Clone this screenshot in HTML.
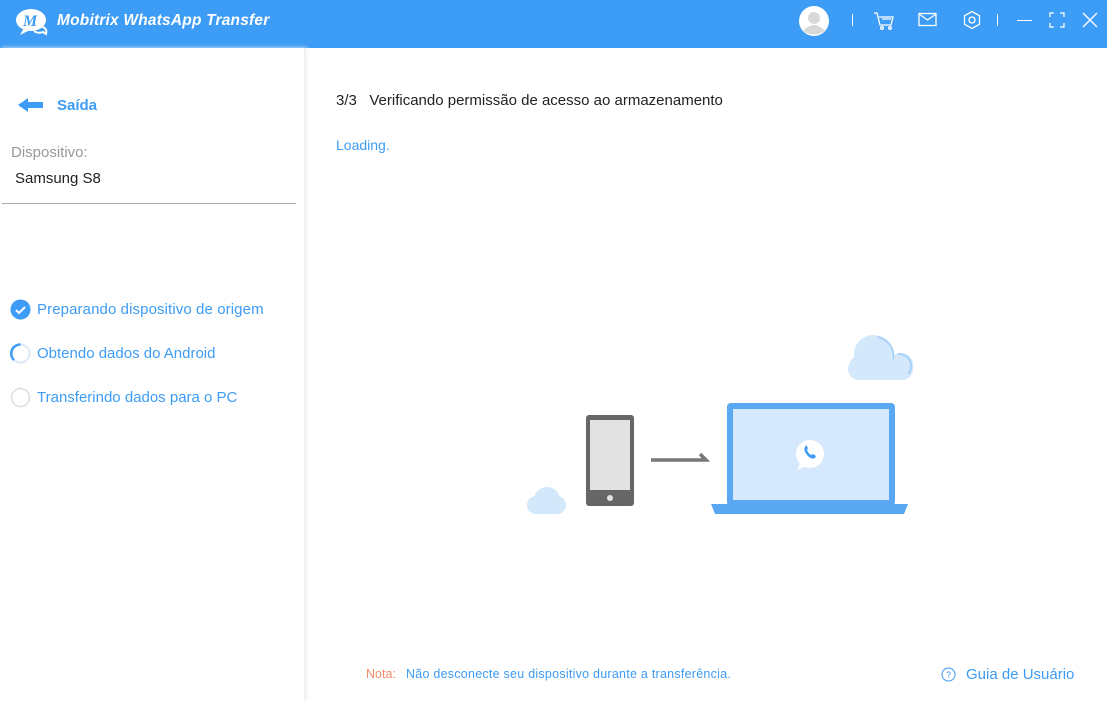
<!DOCTYPE html>
<html><head><meta charset="utf-8"><style>
*{margin:0;padding:0;box-sizing:border-box}
body{width:1107px;height:701px;overflow:hidden;background:#fff;font-family:"Liberation Sans",sans-serif;position:relative}
.top{position:absolute;left:0;top:0;width:1107px;height:48px;background:#3d9cf5}
.t{position:absolute;white-space:nowrap}
.side{position:absolute;left:0;top:48px;width:305px;height:653px;background:#fff;border-right:1px solid #eee;box-shadow:2px 0 4px #f2f2f2}
</style></head><body>
<div class="top">
<svg class="t" style="left:14px;top:8px" width="36" height="30" viewBox="0 0 36 30"><ellipse cx="17" cy="12" rx="15" ry="11" fill="#fff"/><path d="M10 20 L6 27 L16 22Z" fill="#fff"/><path d="M26 18 Q34 20 32 26 L29 24 Q24 26 20 23" fill="none" stroke="#fff" stroke-width="2"/><text x="9" y="18" font-family="Liberation Serif" font-style="italic" font-weight="bold" font-size="16" fill="#3d9cf5">M</text></svg>
<div class="t" style="left:57px;top:12px;color:#fff;font-weight:bold;font-style:italic;font-size:15.5px;letter-spacing:0.2px">Mobitrix WhatsApp Transfer</div>
<svg class="t" style="left:798px;top:5px" width="32" height="32"><circle cx="16" cy="16" r="15" fill="#fff"/><circle cx="16" cy="13" r="6" fill="#d8d8d8"/><path d="M5 26 Q16 14 27 26 Q16 33 5 26Z" fill="#d8d8d8"/></svg>
<div class="t" style="left:852px;top:14px;width:1px;height:12px;background:#fff"></div>
<svg class="t" style="left:873px;top:11px" width="22" height="20" fill="none" stroke="#fff" stroke-width="1.3"><path d="M1 2h3l3 12h11l2-8H6M9 8h9"/><circle cx="9" cy="17" r="1.3"/><circle cx="17" cy="17" r="1.3"/></svg>
<svg class="t" style="left:918px;top:12px" width="20" height="16" fill="none" stroke="#fff" stroke-width="1.3"><rect x="1" y="1.5" width="17" height="12"/><path d="M1 2l8.5 6 8.5-6"/></svg>
<svg class="t" style="left:962px;top:10px" width="20" height="20" fill="none" stroke="#fff" stroke-width="1.3"><path d="M10 1.5l7.5 4.3v8.4L10 18.5 2.5 14.2V5.8Z"/><circle cx="10" cy="10" r="3"/></svg>
<div class="t" style="left:997px;top:14px;width:1px;height:12px;background:#fff"></div>
<div class="t" style="left:1017px;top:20px;width:15px;height:1.3px;background:#fff"></div>
<svg class="t" style="left:1049px;top:12px" width="16" height="16" fill="none" stroke="#fff" stroke-width="1.3"><path d="M1 5V1h4M11 1h4v4M15 11v4h-4M5 15H1v-4"/></svg>
<svg class="t" style="left:1082px;top:12px" width="16" height="16" stroke="#fff" stroke-width="1.3"><path d="M1 1l14 14M15 1L1 15"/></svg>
</div>
<div class="side">
<svg class="t" style="left:18px;top:49px" width="26" height="16"><path d="M0 8L10 1V5H25V11H10V15Z" fill="#3d9cf5"/></svg>
<div class="t" style="left:57px;top:49px;color:#3d9cf5;font-weight:bold;font-size:15px">Saída</div>
<div class="t" style="left:11px;top:96px;color:#999;font-size:15px">Dispositivo:</div>
<div class="t" style="left:15px;top:122px;color:#222;font-size:15px">Samsung S8</div>
<div class="t" style="left:2px;top:155px;width:294px;height:1px;background:#aaa"></div>
<svg class="t" style="left:10px;top:251px" width="22" height="22"><circle cx="10.5" cy="10.5" r="10" fill="#3d9cf5"/><path d="M6 11l3 3 6-6" fill="none" stroke="#fff" stroke-width="2"/></svg>
<div class="t" style="left:37px;top:253px;color:#3d9cf5;font-size:15px;letter-spacing:0.1px">Preparando dispositivo de origem</div>
<svg class="t" style="left:10px;top:295px" width="22" height="22"><circle cx="10.5" cy="10.5" r="9" fill="none" stroke="#ddeaf7" stroke-width="2"/><path d="M10.5 1.5A9 9 0 0 0 4 17" fill="none" stroke="#3d9cf5" stroke-width="2.5"/></svg>
<div class="t" style="left:37px;top:297px;color:#3d9cf5;font-size:15px">Obtendo dados do Android</div>
<svg class="t" style="left:10px;top:339px" width="22" height="22"><circle cx="10.5" cy="10.5" r="9" fill="none" stroke="#ddd" stroke-width="1.5"/></svg>
<div class="t" style="left:37px;top:341px;color:#3d9cf5;font-size:15px">Transferindo dados para o PC</div>
</div>
<div class="t" style="left:336px;top:92px;color:#222;font-size:15px">3/3&nbsp;&nbsp;&nbsp;Verificando permissão de acesso ao armazenamento</div>
<div class="t" style="left:336px;top:137px;color:#3d9cf5;font-size:14px">Loading.</div>
<svg class="t" style="left:520px;top:330px" width="400" height="190">
<g fill="#d3e8fb"><circle cx="353" cy="24" r="19"/><circle cx="341" cy="37" r="12"/><circle cx="381" cy="35" r="12"/><rect x="328" y="28" width="65" height="22" rx="11"/></g>
<path d="M358 7a19 19 0 0 1 15 22 M378 24a12 12 0 0 1 10 20" fill="none" stroke="#a9d1f7" stroke-width="2"/>
<g fill="#d3e8fb"><circle cx="27" cy="170" r="13"/><rect x="7" y="166" width="39" height="18" rx="9"/></g>
<rect x="66" y="85" width="48" height="91" rx="3" fill="#666"/><rect x="70" y="90" width="40" height="70" fill="#e2e2e2"/><circle cx="90" cy="168" r="3" fill="#e2e2e2"/>
<path d="M131 130h55l-6-6" fill="none" stroke="#777" stroke-width="3.5"/>
<rect x="207" y="73" width="168" height="103" rx="4" fill="#5aa8f2"/><rect x="213" y="79" width="156" height="91" fill="#d6e9fc"/>
<path d="M191 174h197l-4 10H195Z" fill="#5aa8f2"/>
<circle cx="290" cy="124" r="14" fill="#fff"/><path d="M280 134l-3 6 7-3" fill="#fff"/>
<path d="M285 117q-2 3 2 8t8 3l1-2-3-2-2 1q-3-2-4-5l1-2-2-3z" fill="#3d9cf5"/>
</svg>
<div class="t" style="left:366px;top:667px;font-size:12.5px;color:#f08c6a">Nota:</div>
<div class="t" style="left:406px;top:667px;font-size:12.5px;color:#3d9cf5;letter-spacing:0.25px">Não desconecte seu dispositivo durante a transferência.</div>
<svg class="t" style="left:941px;top:667px" width="15" height="15"><circle cx="7.5" cy="7.5" r="6.5" fill="none" stroke="#3d9cf5" stroke-width="1"/><text x="7.5" y="11" text-anchor="middle" font-size="9" fill="#3d9cf5">?</text></svg>
<div class="t" style="left:966px;top:666px;font-size:15px;color:#3d9cf5">Guia de Usuário</div>
</body></html>
